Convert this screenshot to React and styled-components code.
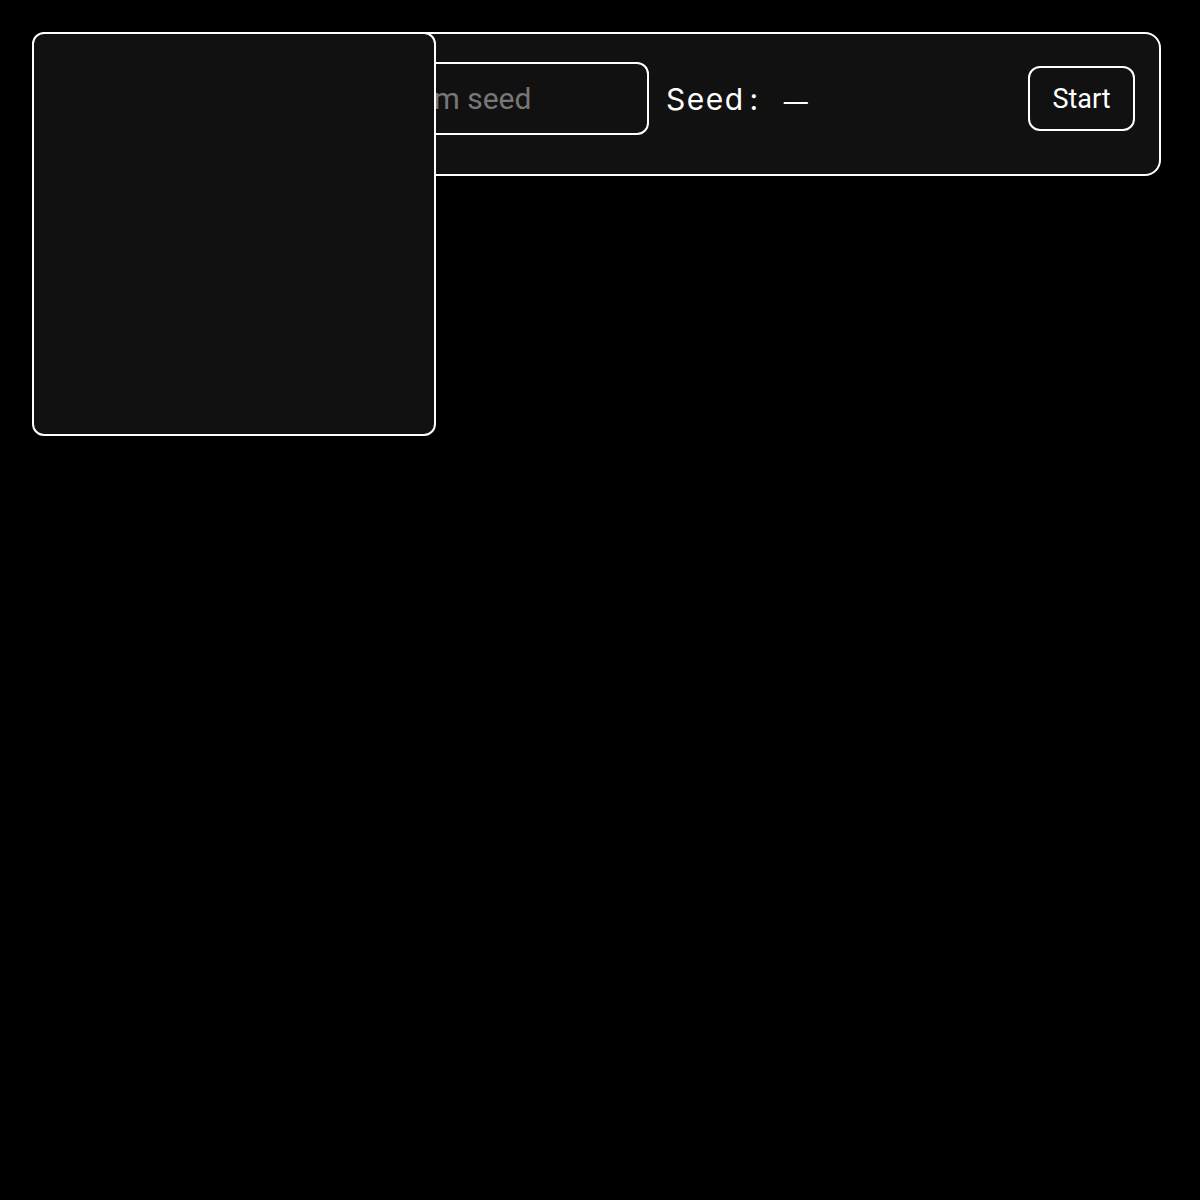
import React from "react";
import styled, { createGlobalStyle } from "styled-components";

const Global = createGlobalStyle`
  html, body { margin: 0; padding: 0; background: #000; }
  body { font-family: Roboto, "Liberation Sans", sans-serif; color: #fff; }
  * { box-sizing: border-box; }
`;

const Page = styled.div`
  position: relative;
  padding: 32px 39px 32px 32px;
  min-height: 1200px;
`;

const Toolbar = styled.div`
  display: flex;
  align-items: center;
  height: 144px;
  padding: 28px 24px 40px 298px;
  background: #111;
  border: 2px solid #fff;
  border-radius: 16px;
`;

const SeedInput = styled.input`
  width: 317px;
  height: 73px;
  padding: 0 14px;
  background: #111;
  border: 2px solid #fff;
  border-radius: 12px;
  color: #fff;
  font-family: Roboto, "Liberation Sans", sans-serif;
  font-size: 30px;
  outline: none;
  &::placeholder { color: #777; }
`;

const SeedLabel = styled.div`
  margin: 2px 0 0 17px;
  display: flex;
  align-items: baseline;
  font-family: Inter, "Noto Sans", sans-serif;
  font-size: 30px;
  letter-spacing: 1.5px;
  color: #fff;
`;

const Colon = styled.span`
  margin-left: 5px;
`;

const SeedValue = styled.span`
  margin-left: 24px;
  font-size: 24px;
  line-height: 1;
`;

const StartButton = styled.button`
  margin-left: auto;
  width: 107px;
  height: 65px;
  padding-top: 2px;
  background: #111;
  border: 2px solid #fff;
  border-radius: 12px;
  color: #fff;
  font-family: Roboto, "Liberation Sans", sans-serif;
  font-size: 27px;
  cursor: pointer;
`;

const Preview = styled.div`
  position: absolute;
  top: 32px;
  left: 32px;
  width: 404px;
  height: 404px;
  background: #111;
  border: 2px solid #fff;
  border-radius: 12px;
`;

export default function App() {
  return (
    <>
      <Global />
      <Page>
        <Toolbar>
          <SeedInput placeholder="Random seed" />
          <SeedLabel>
            Seed<Colon>:</Colon>
            <SeedValue>—</SeedValue>
          </SeedLabel>
          <StartButton>Start</StartButton>
        </Toolbar>
        <Preview />
      </Page>
    </>
  );
}
